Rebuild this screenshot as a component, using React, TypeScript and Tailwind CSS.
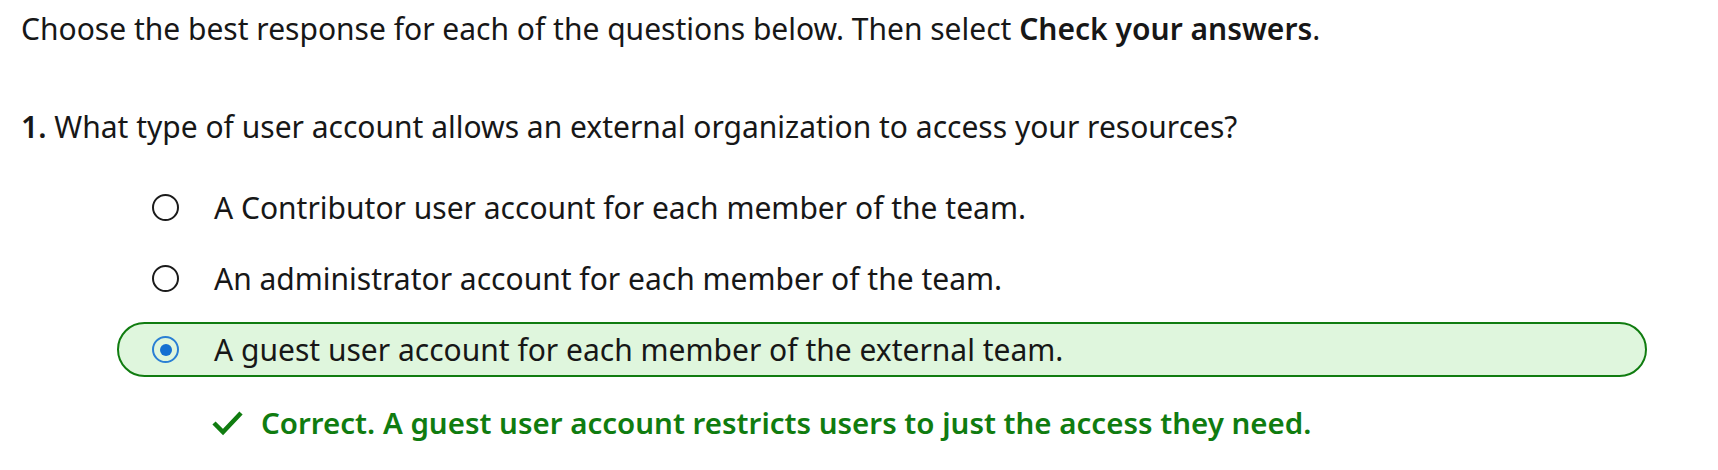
const options = [
  { id: 'a', text: 'A Contributor user account for each member of the team.' },
  { id: 'b', text: 'An administrator account for each member of the team.' },
  { id: 'c', text: 'A guest user account for each member of the external team.' },
];

const selected = 'c';

function Radio({ checked }: { checked: boolean }) {
  if (checked) {
    return (
      <span className="flex h-[27px] w-[27px] shrink-0 items-center justify-center rounded-full border-[2px] border-[#2a7fd4]">
        <span className="h-[12px] w-[12px] rounded-full bg-[#1570d1]" />
      </span>
    );
  }
  return <span className="h-[27px] w-[27px] shrink-0 rounded-full border-[2px] border-[#1b1b1b]" />;
}

export default function App() {
  return (
    <div className="h-[470px] w-[1718px] bg-white pl-[21px] font-['Noto_Sans',sans-serif] text-[30px] text-[#171717]">
      <p className="mt-[1px] flex h-[54px] items-center">
        <span>
          Choose the best response for each of the questions below. Then select{' '}
          <strong className="font-semibold">Check your answers</strong>.
        </span>
      </p>

      <p className="mt-[44px] flex h-[54px] items-center">
        <span>
          <strong className="font-semibold">1.</strong> What type of user account allows an external organization to
          access your resources?
        </span>
      </p>

      <div className="mt-[27px] flex w-[1626px] flex-col gap-[16px] pl-[96px]">
        {options.map((o) => {
          const isSel = o.id === selected;
          return (
            <div
              key={o.id}
              className={
                isSel
                  ? 'flex h-[55px] items-center gap-[35px] rounded-full border-[2px] border-[#107c10] bg-[#dff6dd] pl-[33px]'
                  : 'flex h-[55px] items-center gap-[35px] rounded-full border-[2px] border-transparent pl-[33px]'
              }
            >
              <Radio checked={isSel} />
              <span>{o.text}</span>
            </div>
          );
        })}
      </div>

      <div className="mt-[19px] flex h-[54px] items-center gap-[17px] pl-[191px] text-[29.5px] font-semibold text-[#107c10]">
        <svg width="32" height="26" viewBox="0 0 32 26" className="shrink-0">
          <path d="M2 13 L11 22 L29 3" fill="none" stroke="#107c10" strokeWidth="4.5" />
        </svg>
        <span>Correct. A guest user account restricts users to just the access they need.</span>
      </div>
    </div>
  );
}
